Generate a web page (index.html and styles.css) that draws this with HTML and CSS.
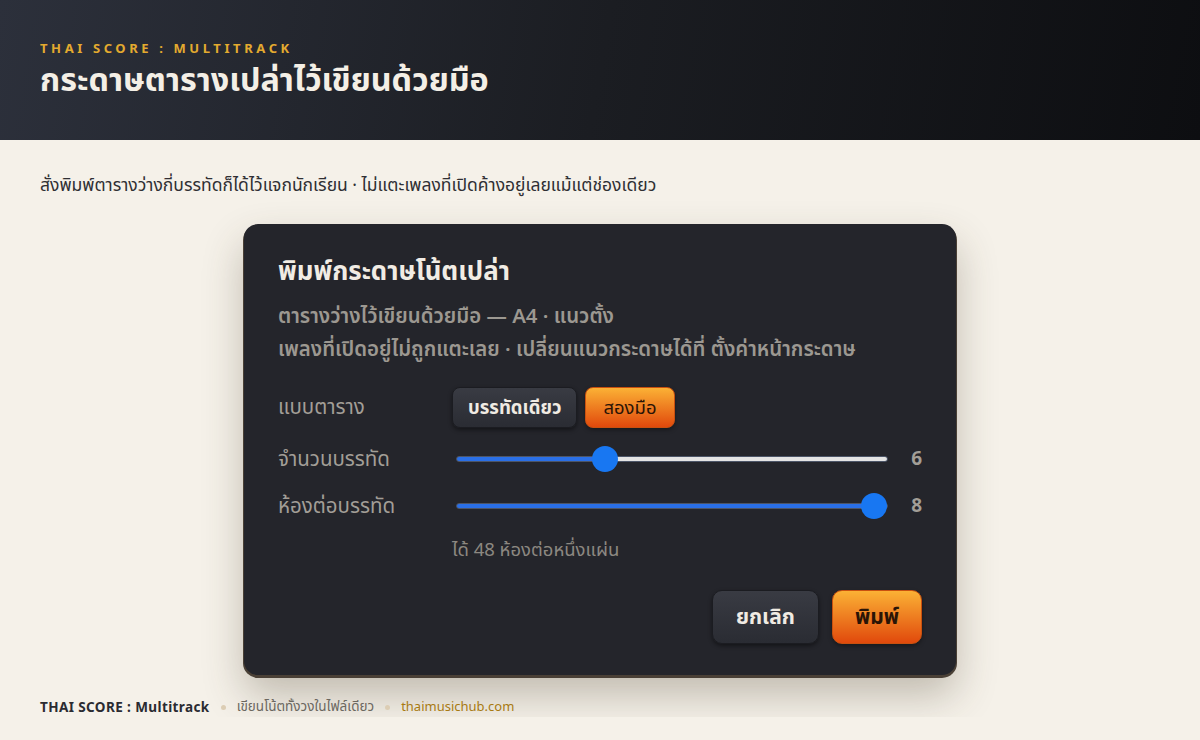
FILE: index.html
```html
<!DOCTYPE html>
<html lang="th">

<head>
    <meta charset="UTF-8">
    <meta name="viewport" content="width=device-width, initial-scale=1.0">
    <title>THAI SCORE : Multitrack — กระดาษตารางเปล่า</title>
    <link rel="stylesheet" href="styles.css">
</head>

<body>

    <header class="top">
        <div class="eyebrow">THAI SCORE : MULTITRACK</div>
        <h1>กระดาษตารางเปล่าไว้เขียนด้วยมือ</h1>
    </header>

    <main class="page">
        <p class="lead">สั่งพิมพ์ตารางว่างกี่บรรทัดก็ได้ไว้แจกนักเรียน · ไม่แตะเพลงที่เปิดค้างอยู่เลยแม้แต่ช่องเดียว</p>

        <div class="dialog">
            <h2>พิมพ์กระดาษโน้ตเปล่า</h2>
            <p class="desc">ตารางว่างไว้เขียนด้วยมือ — A4 · แนวตั้ง</p>
            <p class="desc">เพลงที่เปิดอยู่ไม่ถูกแตะเลย · เปลี่ยนแนวกระดาษได้ที่ ตั้งค่าหน้ากระดาษ</p>

            <div class="field field-toggle">
                <span class="field-label">แบบตาราง</span>
                <div class="seg">
                    <button class="btn btn-dark">บรรทัดเดียว</button>
                    <button class="btn btn-orange btn-soft">สองมือ</button>
                </div>
            </div>

            <div class="field">
                <label class="field-label" for="rows">จำนวนบรรทัด</label>
                <input type="range" id="rows" min="2" max="14" value="6" style="--pct: 33%">
                <span class="val">6</span>
            </div>

            <div class="field">
                <label class="field-label" for="bars">ห้องต่อบรรทัด</label>
                <input type="range" id="bars" min="2" max="8" value="8" style="--pct: 100%">
                <span class="val">8</span>
            </div>

            <p class="note">ได้ 48 ห้องต่อหนึ่งแผ่น</p>

            <div class="actions">
                <button class="btn btn-dark btn-big">ยกเลิก</button>
                <button class="btn btn-orange btn-big">พิมพ์</button>
            </div>
        </div>
    </main>

    <footer class="foot">
        <strong>THAI SCORE : Multitrack</strong>
        <span class="dot"></span>
        <span>เขียนโน้ตทั้งวงในไฟล์เดียว</span>
        <span class="dot"></span>
        <a href="#">thaimusichub.com</a>
    </footer>

</body>

</html>
```

FILE: styles.css
```css
body {
    margin: 0;
    padding: 0;
    background-color: #f5f1e9;
    font-family: "Noto Sans", "Noto Sans Thai", sans-serif;
    color: #2d2e33;
}

.top {
    height: 140px;
    box-sizing: border-box;
    padding: 38px 40px 0;
    background: linear-gradient(100deg, #2c303b 0%, #1b1d22 50%, #0d0e11 100%);
}

.eyebrow {
    font-size: 13px;
    font-weight: 700;
    letter-spacing: 3.6px;
    color: #e3aa2f;
    line-height: 20px;
}

h1 {
    margin: 2px 0 0;
    font-size: 32.3px;
    line-height: 44px;
    font-weight: 700;
    color: #f4efe6;
    font-family: "Noto Sans Thai", sans-serif;
}

.page {
    padding: 0 40px;
}

.lead {
    margin: 0;
    padding-top: 36px;
    font-size: 17.5px;
    line-height: 20px;
    font-family: "Noto Sans Thai", sans-serif;
    color: #2f2f33;
}

/* dialog */

.dialog {
    width: 712px;
    box-sizing: border-box;
    margin: 28px auto 0;
    padding: 33px 34px 31px;
    background-color: #24252b;
    border-radius: 14px;
    box-shadow: 0 2px 0 1px #4a4036, 0 20px 40px rgba(70, 60, 40, 0.3);
    font-family: "Noto Sans Thai", "Noto Sans", sans-serif;
}

.dialog h2 {
    margin: 0;
    font-size: 25.8px;
    line-height: 32px;
    font-weight: 700;
    color: #f1ece4;
}

.desc {
    margin: 0;
    font-size: 20.4px;
    line-height: 33px;
    font-weight: 600;
    color: #9c9891;
}

.dialog h2 + .desc {
    margin-top: 11px;
}

.field {
    display: flex;
    align-items: center;
    height: 32px;
    margin-top: 15px;
}

.field-toggle {
    height: 41px;
    margin-top: 21px;
}

.field-label {
    width: 174px;
    flex-shrink: 0;
    font-size: 20.5px;
    font-weight: 400;
    color: #a29e97;
}

.seg {
    display: flex;
    gap: 8px;
}

.btn {
    font-family: inherit;
    font-size: 18.5px;
    font-weight: 700;
    height: 41px;
    padding: 0 15px;
    border-radius: 8px;
    cursor: pointer;
}

.btn-dark {
    color: #f0ebe3;
    background: linear-gradient(#393b43, #2a2c33);
    border: 1px solid #1b1c21;
    box-shadow: 0 2px 4px rgba(0, 0, 0, 0.45);
}

.btn-orange {
    color: #2a1406;
    background: linear-gradient(#fbb135, #e1490c);
    border: 1px solid #c9500f;
    box-shadow: 0 2px 4px rgba(0, 0, 0, 0.35);
}

.btn-soft {
    font-weight: 400;
    padding: 0 17px;
}

input[type="range"] {
    -webkit-appearance: none;
    appearance: none;
    flex: 1;
    margin: 0 0 0 4px;
    height: 26px;
    background: transparent;
}

input[type="range"]::-webkit-slider-runnable-track {
    height: 6px;
    border-radius: 3px;
    border: 1px solid #4c5567;
    background: linear-gradient(90deg, #2a6fe6 var(--pct), #e4e4e4 var(--pct));
}

input[type="range"]::-webkit-slider-thumb {
    -webkit-appearance: none;
    width: 26px;
    height: 26px;
    margin-top: -11px;
    border-radius: 50%;
    background: #1877f2;
    border: none;
}

.val {
    width: 34px;
    flex-shrink: 0;
    text-align: right;
    font-size: 19px;
    font-weight: 700;
    color: #a29e97;
}

.note {
    margin: 14px 0 0 174px;
    font-size: 18.5px;
    line-height: 28px;
    font-weight: 400;
    color: #8c8881;
}

.actions {
    display: flex;
    justify-content: flex-end;
    gap: 13px;
    margin-top: 26px;
}

.btn-big {
    height: 54px;
    font-size: 21px;
    padding: 0 23px;
    border-radius: 10px;
}

.btn-big.btn-orange {
    padding: 0 22px;
}

/* footer */

.foot {
    display: flex;
    align-items: center;
    gap: 11px;
    padding: 22px 40px 0;
    font-size: 13.5px;
    line-height: 20px;
    color: #6b675f;
}

.foot strong {
    color: #2a2b31;
    letter-spacing: 0.4px;
}

.foot span,
.foot a {
    font-family: "Noto Sans Thai", sans-serif;
}

.dot {
    width: 5px;
    height: 5px;
    border-radius: 50%;
    background-color: #dccdb4;
}

.foot a {
    font-size: 13px;
    color: #a87a12;
    text-decoration: none;
}
```
